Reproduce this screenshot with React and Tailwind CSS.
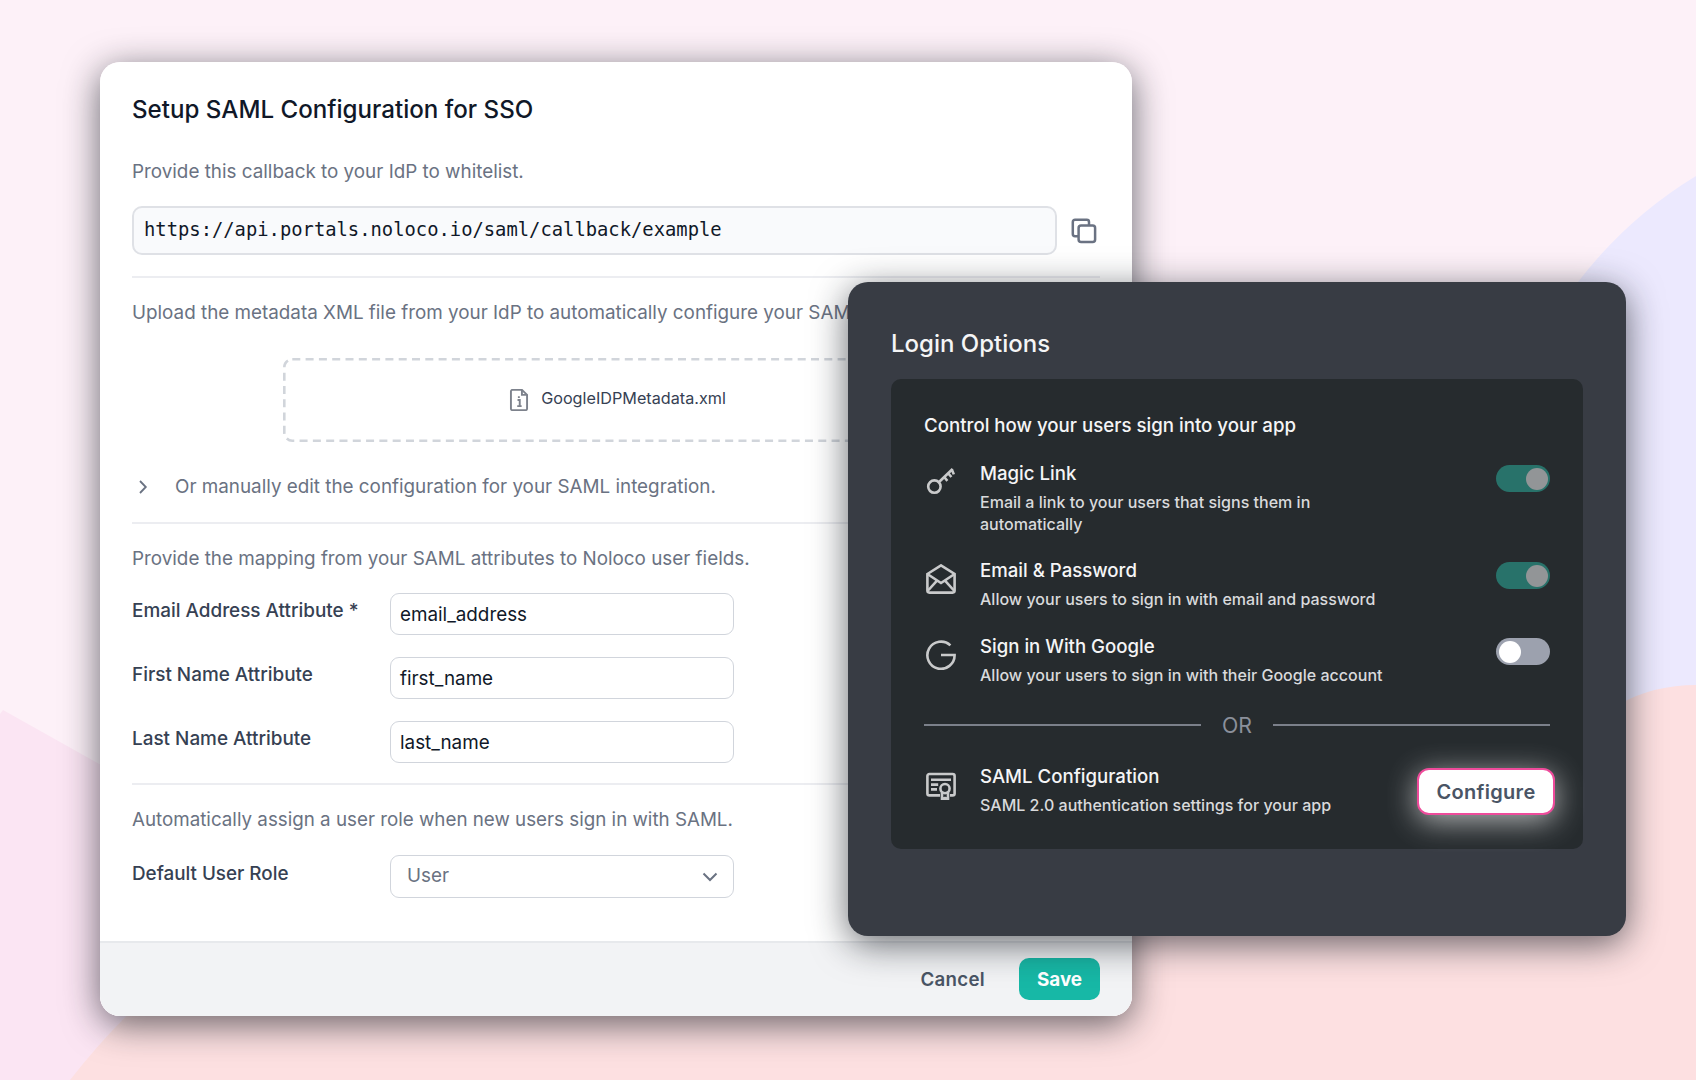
import React from 'react';

const FIELDS = [
  { label: 'Email Address Attribute *', value: 'email_address' },
  { label: 'First Name Attribute', value: 'first_name' },
  { label: 'Last Name Attribute', value: 'last_name' },
];

const Icon = ({ className, children }) => (
  <svg viewBox="0 0 15 15" fill="none" stroke="currentColor" strokeWidth="1.3" className={className}>
    {children}
  </svg>
);

const KeyIcon = () => (
  <Icon className="w-[30px] h-[30px]">
    <circle cx="4.2" cy="9.8" r="3.1" />
    <path d="M6.4 7.6L13.3 1M12.9 1.1l1 2.6M11 3.1l1.7 1.9M9.1 5l1.6 1.9" />
  </Icon>
);

const EnvelopeIcon = () => (
  <Icon className="w-[30px] h-[30px]">
    <path d="M.7 5l6.8-4.3L14.300 5v8.300a1 1 0 01-1 1H1.700a1 1 0 01-1-1V5z" />
    <path d="M.7 5l6.800 4.500L14.300 5M.8 13.500L5.500 8.300M14.200 13.500L9.500 8.300" />
  </Icon>
);

const GoogleIcon = () => (
  <Icon className="w-[30px] h-[30px]">
    <path d="M12.200 2.700A6.800 6.800 0 1014.300 7.500H7.500" />
  </Icon>
);

const CertificateIcon = () => (
  <Icon className="w-[30px] h-[30px]">
    <path d="M7 12.700H1.700a1 1 0 01-1-1V3a1 1 0 011-1h11.600a1 1 0 011 1v8.700a1 1 0 01-1 1h-1.300" />
    <path d="M2.500 4.900h10M2.500 7.300h3.600M2.500 9.700h3" />
    <circle cx="9.500" cy="9.300" r="2.300" />
    <path d="M8 11.200v3.600l1.500-.8 1.500.8v-3.600" />
  </Icon>
);

const FileIcon = () => (
  <Icon className="w-[22px] h-[22px] text-[#7d828c]">
    <path d="M2 13.400V1.600a1 1 0 011-1h6.500L13 4v9.400a1 1 0 01-1 1H3a1 1 0 01-1-1z" />
    <path d="M9.500.6V4H13" />
    <path d="M6.500 7.500H8v4M6.300 11.700h3M7.400 5v1.200" />
  </Icon>
);

const CopyIcon = () => (
  <svg viewBox="0 0 26 26" fill="none" stroke="currentColor" strokeWidth="2.5" className="w-[26px] h-[26px] text-gray-500">
    <rect x="7.6" y="7.6" width="16.5" height="16.5" rx="2.5" />
    <path d="M7.5 18.2H4A2.2 2.2 0 011.800 16V4A2.200 2.200 0 014 1.800h11.800A2.200 2.200 0 0118 4v3.600" />
  </svg>
);

const Divider = ({ className }) => <div className={`h-[2px] bg-[#ecedf1] ${className}`} />;

const Toggle = ({ on }) => (
  <div
    className={`mt-[6px] flex h-[27px] w-[54px] shrink-0 items-center rounded-full p-[2.5px] ${
      on ? 'justify-end bg-[#28726a]' : 'bg-[#9ca1ae]'
    }`}
  >
    <div className={`size-[22px] rounded-full ${on ? 'bg-[#929597]' : 'bg-white'}`} />
  </div>
);

const Option = ({ icon, title, text, className, children }) => (
  <div className={`flex items-start ${className}`}>
    <div className="ml-[2px] mt-2 shrink-0 text-[#c9cacb]">{icon}</div>
    <div className="ml-6 w-[410px]">
      <div className="text-[18.62px] leading-7 font-medium text-[#f5f5f6]">{title}</div>
      <div className="mt-1 text-[16.04px] leading-[22px] font-medium text-[#d9dadc]">{text}</div>
    </div>
    <div className="flex-1" />
    {children}
  </div>
);

const Background = () => (
  <svg viewBox="0 0 1696 1080" className="absolute inset-0 h-full w-full">
    <rect width="1696" height="1080" fill="#fdf1f8" />
    <path d="M0 714L3 710L110 770L640 1080H0z" fill="#fbe5f3" />
    <path d="M1500 420Q1535 330 1578 282Q1627 218 1696 176V760H1500z" fill="#ece9fe" />
    <path d="M70 1080Q125 1010 180 970L1100 900L1560 760Q1612 685 1696 685V1080z" fill="#fde0e1" />
  </svg>
);

function SamlCard() {
  return (
    <div className="flex h-[954px] w-[1032px] flex-col overflow-hidden rounded-[20px] bg-white text-[18.83px] text-gray-500">
      <div className="flex-1 px-8 pt-[30px]">
        <h1 className="text-[24.13px] leading-9 font-medium text-gray-900">Setup SAML Configuration for SSO</h1>
        <p className="mt-[30px] leading-7">Provide this callback to your IdP to whitelist.</p>
        <div className="mt-5 flex items-center gap-[14px]">
          <div className="h-[49px] w-[925px] rounded-[10px] border-2 border-[#dfe1e6] bg-[#f9fafc] pl-[10px] font-['DejaVu_Sans_Mono',monospace] text-[18.82px] leading-[43px] text-gray-900">
            https://api.portals.noloco.io/saml/callback/example
          </div>
          <CopyIcon />
        </div>
        <Divider className="mt-[21px]" />
        <p className="mt-[21px] leading-7 whitespace-nowrap">
          Upload the metadata XML file from your IdP to automatically configure your SAML integration.
        </p>
        <div className="relative mx-auto mt-[31px] flex h-[84px] w-[666px] items-center justify-center gap-[11px] pl-[2px]">
          <svg className="absolute inset-0 h-full w-full" fill="none">
            <rect x="1.3" y="1.3" width="663.4" height="81.4" rx="8" stroke="#d1d5db" strokeWidth="2.6" strokeDasharray="8 5.3" />
          </svg>
          <FileIcon />
          <span className="-mt-1 text-[16.2px] text-gray-700">GoogleIDPMetadata.xml</span>
        </div>
        <div className="mt-[31px] flex items-center leading-7">
          <svg viewBox="0 0 10 14" fill="none" stroke="currentColor" strokeWidth="1.8" className="ml-[6px] h-[14px] w-[10px]">
            <path d="M2 1l5.8 6L2 13" />
          </svg>
          <span className="ml-[27px]">Or manually edit the configuration for your SAML integration.</span>
        </div>
        <Divider className="mt-[21px]" />
        <p className="mt-[21px] leading-7">Provide the mapping from your SAML attributes to Noloco user fields.</p>
        <div className="mt-5 flex flex-col gap-[22px]">
          {FIELDS.map(({ label, value }) => (
            <div key={value} className="flex items-start">
              <div className="mt-1 w-[258px] text-[18.92px] leading-7 font-medium text-gray-700">{label}</div>
              <div className="h-[42px] w-[344px] rounded-[9px] border-[1.5px] border-gray-300 pl-[9px] leading-[41px] text-gray-900">
                {value}
              </div>
            </div>
          ))}
        </div>
        <Divider className="mt-[20px]" />
        <p className="mt-[21px] text-[18.78px] leading-7">Automatically assign a user role when new users sign in with SAML.</p>
        <div className="mt-[21px] flex items-start">
          <div className="mt-[5px] w-[258px] leading-7 font-medium text-gray-700">Default User Role</div>
          <div className="flex h-[43px] w-[344px] items-center justify-between rounded-[9px] border-[1.5px] border-gray-300 pr-[15px] pl-[16px]">
            <span>User</span>
            <svg viewBox="0 0 16 10" fill="none" stroke="currentColor" strokeWidth="2" className="h-[10px] w-4">
              <path d="M1.5 1.5L8 8l6.5-6.5" />
            </svg>
          </div>
        </div>
      </div>
      <div className="flex h-[75px] items-center justify-end gap-[34px] border-t-2 border-[#e7e9ec] bg-[#f2f3f5] pr-8">
        <span className="mt-px text-[18.7px] font-semibold tracking-[0.3px] text-gray-600">Cancel</span>
        <div className="-mt-px flex h-[42px] w-[81px] items-center justify-center rounded-[10px] bg-[#17b8a6] pt-[2px] font-bold text-white">
          Save
        </div>
      </div>
    </div>
  );
}

function LoginOptions() {
  return (
    <div className="h-[654px] w-[778px] rounded-[20px] bg-[#383c44] px-[43px] pt-[44px] shadow-[0_8px_36px_rgba(20,24,32,0.65)]">
      <h2 className="text-[24px] leading-9 font-medium text-[#f5f5f6]">Login Options</h2>
      <div className="mt-[17px] h-[470px] w-[692px] rounded-[10px] bg-[#262b2e] px-[33px] pt-[33px]">
        <div className="text-[18.67px] leading-7 font-medium text-[#f5f5f6]">Control how your users sign into your app</div>
        <Option
          className="mt-[19px]"
          icon={<KeyIcon />}
          title="Magic Link"
          text={<>Email a link to your users that signs them in<br />automatically</>}
        >
          <Toggle on />
        </Option>
        <Option
          className="mt-[21px]"
          icon={<EnvelopeIcon />}
          title="Email & Password"
          text="Allow your users to sign in with email and password"
        >
          <Toggle on />
        </Option>
        <Option
          className="mt-[22px]"
          icon={<GoogleIcon />}
          title="Sign in With Google"
          text="Allow your users to sign in with their Google account"
        >
          <Toggle />
        </Option>
        <div className="mt-[23px] flex items-center text-[21.3px] leading-8 text-[#8b909b]">
          <div className="h-[1.5px] flex-1 bg-[#7b808a]" />
          <span className="w-[72px] text-center">OR</span>
          <div className="h-[1.5px] flex-1 bg-[#7b808a]" />
        </div>
        <Option
          className="mt-[21px]"
          icon={<CertificateIcon />}
          title="SAML Configuration"
          text="SAML 2.0 authentication settings for your app"
        >
          <div className="mt-[6px] -mr-[5px] flex h-[47px] w-[138px] shrink-0 items-center justify-center rounded-xl border-2 border-[#ee4b9b] bg-white text-[20px] font-semibold tracking-[0.3px] text-gray-600 shadow-[0_6px_30px_rgba(255,255,255,0.65)]">
            Configure
          </div>
        </Option>
      </div>
    </div>
  );
}

export default function App() {
  return (
    <div className="relative h-[1080px] w-[1696px] overflow-hidden font-['Inter',sans-serif]">
      <Background />
      <div className="relative pt-[62px] pl-[100px]">
        <div className="w-[1032px] rounded-[20px] shadow-[0_8px_36px_rgba(20,24,32,0.65)]">
          <SamlCard />
        </div>
      </div>
      {/* Overlaps the SAML card */}
      <div className="absolute top-[282px] left-[848px]">
        <LoginOptions />
      </div>
    </div>
  );
}
